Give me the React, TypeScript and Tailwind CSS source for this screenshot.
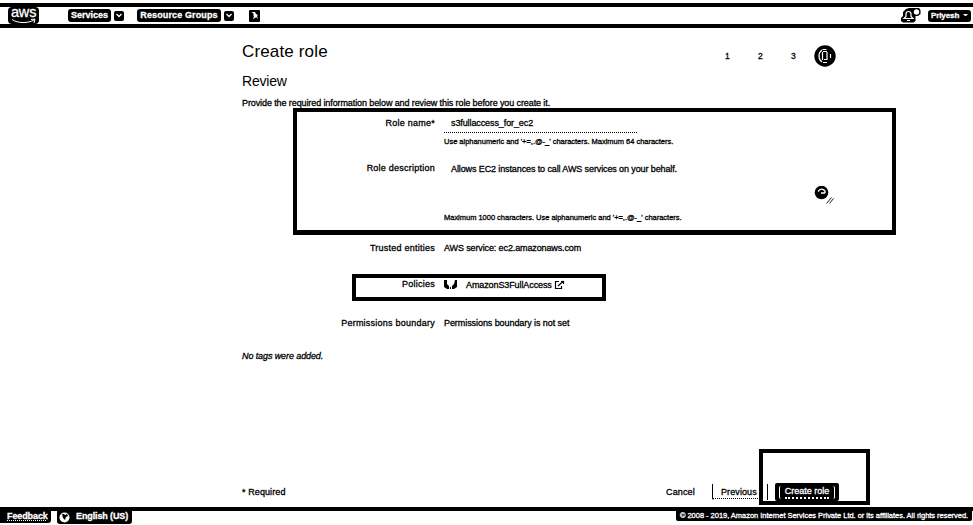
import type { ReactNode } from "react";

function Caret() {
  return (
    <span className="flex h-[10px] w-[10px] items-center justify-center rounded-[2px] bg-black">
      <svg width="6" height="5" viewBox="0 0 6 5" fill="none" stroke="white" strokeWidth="1.3">
        <path d="M.5 1 3 3.5 5.5 1" />
      </svg>
    </span>
  );
}

function AwsLogo() {
  return (
    <div className="relative ml-[8px] h-[17px] w-[31px] shrink-0 rounded-[4px] bg-black text-white">
      <span className="absolute left-[3px] top-[-3px] text-[14.5px] font-normal leading-[16px] tracking-[-0.2px]">aws</span>
      <svg className="absolute left-[3px] top-[11px]" width="26" height="6" viewBox="0 0 26 6" fill="none" stroke="white">
        <path d="M1 1.5C7 5.5 17 5.5 23 2M20 1.5l4-.5-1 4" />
      </svg>
    </div>
  );
}

function Field({ label, children, className }: { label: string; children: ReactNode; className: string }) {
  return (
    <div className={`grid grid-cols-[435px_1fr] gap-x-[9px] ${className}`}>
      <div className="text-right tracking-[0.24px]">{label}</div>
      <div>{children}</div>
    </div>
  );
}

function Header() {
  return (
    <header className="mt-[3px] flex h-[25px] items-center border-y-4 border-black text-[9px] font-bold leading-[12px]">
      <AwsLogo />
      <div className="ml-[29px] flex items-center gap-[3px]">
        <span className="h-[13px] w-[43px] rounded-[3px] bg-black text-center leading-[13px] text-white">Services</span>
        <Caret />
      </div>
      <div className="ml-[13px] flex items-center gap-[3px]">
        <span className="h-[13px] w-[84px] rounded-[3px] bg-black text-center leading-[13px] tracking-[0.13px] text-white">Resource Groups</span>
        <Caret />
      </div>
      <span className="ml-[15px] flex h-[12px] w-[11px] items-center justify-center rounded-[1px] bg-black">
        <svg width="9" height="9" viewBox="0 0 9 9" fill="white">
          <path d="M1.500 1h3.500l1 2 2 1-1 1 1 3-2-2-1 1-2 1 1-3-1-1 1-1z" />
        </svg>
      </span>
      <svg className="ml-auto mr-[7px]" width="20" height="15" viewBox="0 0 20 15">
        <path d="M5 1 8 0h10l1.500 2v4L17 8h-2.500v5l-2 1.500H2L0 13v-3l2-2V4z" />
        <path d="M3 10.500h9L10 8.500V6Q10 3.500 7.500 3.500T5 6v2.500zM6 12.500h3" fill="none" stroke="white" strokeWidth="1.200" />
        <circle cx="15.500" cy="4" r="2.700" fill="white" />
      </svg>
      <span className="mr-[2px] flex h-[12px] w-[43px] items-center justify-between rounded-[3px] bg-black px-[3px] text-[8px] text-white">
        <span className="tracking-[-0.1px]">Priyesh</span>
        <svg width="5" height="3" viewBox="0 0 5 3" fill="white"><path d="M0 0h5L3 2H2z" /></svg>
      </span>
    </header>
  );
}

function Steps() {
  return (
    <div className="mr-[137px] flex h-[22px] items-center text-[8.5px]">
      <span className="w-[33px]">1</span>
      <span className="w-[33px]">2</span>
      <span className="w-[23px]">3</span>
      <svg width="22" height="22" viewBox="0 0 22 22">
        <circle cx="11" cy="11" r="10.700" />
        <path d="M8 5Q5 7 5 11t3 6M8.500 4.500h4M9 17.500h4M8.500 7v8M13 7v8M9 6.500h4M10 14.500h3M16.500 9v4" fill="none" stroke="white" strokeWidth="1.200" />
      </svg>
    </div>
  );
}

export default function App() {
  return (
    <div className="relative flex h-[525px] w-[973px] flex-col overflow-hidden bg-white font-['Liberation_Sans',Arial,sans-serif] text-[9px] leading-[12px] text-black [-webkit-text-stroke:0.3px]">
      <Header />
      <main className="flex h-[479px] shrink-0 flex-col">
        <div className="flex items-start justify-between pl-[242px]">
          <h1 className="mt-[13px] text-[17px] leading-[22px] tracking-[0.15px] [-webkit-text-stroke:0]">Create role</h1>
          <div className="mt-[17px]"><Steps /></div>
        </div>
        <h2 className="ml-[242px] mt-[4px] h-[20px] text-[14px] leading-[20px] tracking-[-0.2px] [-webkit-text-stroke:0]">Review</h2>
        <p className="ml-[242px] mt-[6px] h-[12px] w-[330px] whitespace-nowrap tracking-[-0.1px]">Provide the required information below and review this role before you create it.</p>
        <Field label="Role name*" className="mt-[8px] h-[45px]">
          <div className="h-[16px] w-[193px] border-b border-dotted border-black pl-[7px] tracking-[-0.1px]">s3fullaccess_for_ec2</div>
          <div className="mt-[3px] text-[7.5px] tracking-[-0.02px]">Use alphanumeric and '+=,.@-_' characters. Maximum 64 characters.</div>
        </Field>
        <Field label="Role description" className="h-[80px]">
          <div className="flex h-[44px] w-[391px] items-start justify-between pl-[7px]">
            <span className="mt-px tracking-[-0.11px]">Allows EC2 instances to call AWS services on your behalf.</span>
            <svg className="mt-[24px] shrink-0" width="21" height="20" viewBox="0 0 21 20">
              <circle cx="7.500" cy="6.500" r="6.800" />
              <path d="M4 5.500Q7.500 1 11 5v2M7 7h4" fill="none" stroke="white" strokeWidth="1.300" />
              <path d="m12.500 17.500 5-6M15.500 17.500l4-5" stroke="black" strokeWidth=".9" />
            </svg>
          </div>
          <div className="mt-[6px] text-[7.5px] tracking-[-0.02px]">Maximum 1000 characters. Use alphanumeric and '+=,.@-_' characters.</div>
        </Field>
        <Field label="Trusted entities" className="h-[36px]">
          <span className="tracking-[-0.12px]">AWS service: ec2.amazonaws.com</span>
        </Field>
        <Field label="Policies" className="h-[39px]">
          <div className="mt-px flex items-center">
            <svg width="13" height="10" viewBox="0 0 13 10"><path d="M0 0h3v4l2 2v3H3L0 7zM13 0h-2L10 4 8 6v3h2l3-2zM6 7h1v2H6z" /></svg>
            <span className="ml-[9px] tracking-[-0.1px]">AmazonS3FullAccess</span>
            <svg className="ml-[2px]" width="11" height="10" viewBox="0 0 11 10" fill="none" stroke="black">
              <path d="M5 1.500H1.500v7h6V6M4 6l5.500-5M7 1.500h2.500V4" strokeWidth="1.200" />
            </svg>
          </div>
        </Field>
        <Field label="Permissions boundary" className="h-[33px]">
          <span className="tracking-[-0.07px]">Permissions boundary is not set</span>
        </Field>
        <p className="ml-[242px] italic tracking-[-0.1px]">No tags were added.</p>
        <div className="mt-auto flex h-[25px] items-start">
          <span className="ml-[242px] mt-[4px] w-[424px] tracking-[0.1px]">* Required</span>
          <span className="mt-[4px] w-[46px] tracking-[0.15px]">Cancel</span>
          <span className="mt-[2px] h-[16px] w-[56px] rounded-bl-[2px] border-x border-black">
            <span className="block h-[15px] w-[45px] border-b border-dotted border-black pl-[8px] pt-[2px] tracking-[0.1px]">Previous</span>
          </span>
          <button className="ml-[7px] mt-px flex h-[18px] w-[64px] items-center justify-center rounded-[2px] bg-black text-[9px] leading-[12px] text-white">
            <span className="flex h-[13px] w-[56px] justify-center rounded-[2px] border-x border-white">
              <span className="h-[13px] border-b-2 border-dotted border-white leading-[11px]">Create role</span>
            </span>
          </button>
        </div>
      </main>
      <footer className="flex h-[18px] shrink-0 items-start border-t-4 border-black text-[9px] font-bold leading-[11px] text-white">
        <span className="flex h-[12px] w-[51px] rounded-br-[3px] bg-black pl-[7px] tracking-[-0.1px]"><span className="underline decoration-dotted">Feedback</span></span>
        <span className="ml-[6px] flex h-[13px] w-[75px] items-center rounded-b-[3px] bg-black pl-[2px]">
          <svg width="11" height="11" viewBox="0 0 11 11"><circle cx="5.500" cy="5.500" r="5" fill="white" /><path d="M3 2h2l1 1 2-1 1 2-2 1-1 3-2-2z" /></svg>
          <span className="ml-[6px] -mt-[2px] whitespace-nowrap tracking-[-0.12px]">English (US)</span>
        </span>
        <span className="ml-auto mr-[1px] h-[10px] w-[296px] whitespace-nowrap rounded-b-[2px] bg-black text-center text-[7.5px] font-normal leading-[10px] tracking-[-0.03px]">© 2008 - 2019, Amazon Internet Services Private Ltd. or its affiliates. All rights reserved.</span>
      </footer>
      <div className="pointer-events-none absolute left-[293px] top-[108px] h-[127px] w-[603px] border-4 border-b-5 border-black" />
      <div className="pointer-events-none absolute left-[352px] top-[274px] h-[27px] w-[254px] border-4 border-black" />
      <div className="pointer-events-none absolute left-[759px] top-[449px] h-[56px] w-[111px] border-4 border-black" />
    </div>
  );
}
